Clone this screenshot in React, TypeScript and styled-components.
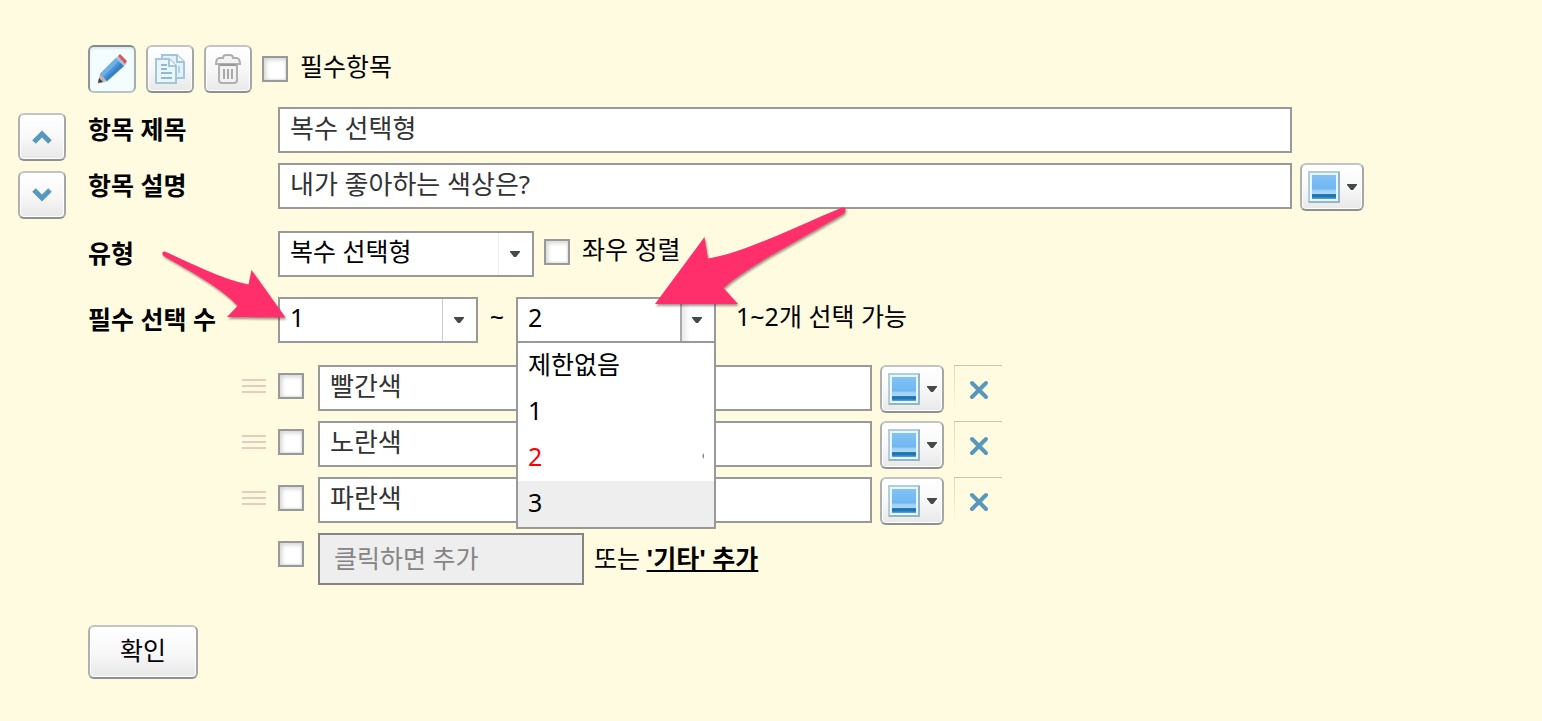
import React, { useState } from "react";
import styled, { createGlobalStyle, css } from "styled-components";

const GlobalStyle = createGlobalStyle`
  *, *::before, *::after { box-sizing: border-box; }
  body {
    margin: 0;
    background: #fffbe1;
    color: #000;
    font-family: "Noto Sans", "Noto Sans CJK KR", sans-serif;
    font-size: 25px;
    line-height: 36px;
  }
  button, input, select { font: inherit; color: inherit; margin: 0; }
`;

const Page = styled.main`
  position: relative;
  display: flex;
  gap: 22px;
  min-height: 100vh;
  padding: 45px 178px 42px 18px;
`;

const MoveColumn = styled.div`
  display: flex;
  flex: none;
  flex-direction: column;
  gap: 10px;
  padding-top: 68px;
`;

const Editor = styled.form`
  flex: 1;
  min-width: 0;
`;

const raised = css`
  display: flex;
  flex: none;
  align-items: center;
  justify-content: center;
  padding: 0;
  border: 2px solid;
  border-color: #c4c4c2 #a6a6a8 #909092 #b0b0b0;
  border-radius: 6px;
  background: linear-gradient(#fff, #f8f8f8 50%, #e8e8e8);
  box-shadow: inset 0 0 0 1px #fff;
`;

const IconButton = styled.button<{ $active?: boolean }>`
  ${raised}
  width: 48px;
  height: 48px;
  ${(p) =>
    p.$active &&
    css`
      border-color: #7f8b90 #a4afb3 #b9c2c4 #8b979c;
      background: #f3fdff;
      box-shadow: inset 0 2px 2px #dfeaec;
    `}
`;

const ImageButton = styled.button`
  ${raised}
  gap: 6px;
  width: 64px;
  height: 48px;
  padding-left: 2px;
`;

const RemoveButton = styled.button`
  display: flex;
  flex: none;
  align-items: center;
  justify-content: center;
  width: 48px;
  height: 48px;
  margin-left: 2px;
  padding: 0 0 0 1px;
  border: 0 solid #c6c3ae;
  border-top-width: 1px;
  background: linear-gradient(#dad7c2, #fffbe1) left / 1px 100% no-repeat;
`;

const SubmitButton = styled.button`
  ${raised}
  width: 110px;
  height: 54px;
  margin-top: 40px;
  padding-bottom: 4px;
`;

const Toolbar = styled.div`
  display: flex;
  align-items: center;
  gap: 10px;
  margin-bottom: 14px;
`;

const Row = styled.div<{ $after?: number; $inset?: boolean }>`
  display: flex;
  gap: 8px;
  margin-bottom: ${(p) => p.$after ?? 8}px;
  padding-right: ${(p) => (p.$inset ? 72 : 0)}px;
`;

const Name = styled.label`
  flex: none;
  width: 182px;
  height: 46px;
  font-weight: 700;
  line-height: 44px;
`;

const CheckLabel = styled.label<{ $indent?: boolean }>`
  display: flex;
  align-items: center;
  gap: 12px;
  height: 42px;
  padding-left: ${(p) => (p.$indent ? 2 : 0)}px;
`;

const CheckText = styled.span`
  padding-bottom: 6px;
`;

const Check = styled.input.attrs({ type: "checkbox" })`
  appearance: none;
  flex: none;
  width: 26px;
  height: 26px;
  border: 2px solid #999;
  background: #fff;
  box-shadow: inset 2px 2px 4px #d4d4d4, inset -1px -1px 2px #e4e4e4;
  &:checked { background: #5a9abf; }
`;

const TextInput = styled.input.attrs({ type: "text" })`
  flex: 1;
  min-width: 0;
  height: 46px;
  padding: 0 10px 6px;
  border: 2px solid #999;
  border-radius: 0;
  background: #fff;
  color: #333;
  font-size: 26px;
  outline: 0;
`;

const OptionInput = styled(TextInput)`
  flex: 0 1 554px;
`;

const AddInput = styled(TextInput)`
  flex: 0 1 266px;
  height: 52px;
  padding: 0 14px 2px;
  border-color: #858585;
  background: #eee;
  font-size: 25px;
  &::placeholder { color: #858585; opacity: 1; }
`;

const SelectBox = styled.div<{ $width: number }>`
  position: relative;
  display: grid;
  flex: none;
  width: ${(p) => p.$width}px;
  height: 46px;
`;

const Select = styled.select`
  grid-area: 1 / 1;
  appearance: none;
  width: 100%;
  padding: 0 40px 6px 10px;
  border: 2px solid #999;
  border-radius: 0;
  background: #fff;
  outline: 0;
`;

const SelectArrow = styled.span<{ $tone: string; $open?: boolean }>`
  z-index: 1;
  display: flex;
  grid-area: 1 / 1;
  align-items: center;
  justify-content: center;
  justify-self: end;
  width: 34px;
  margin: 2px 2px 2px 0;
  padding-right: 2px;
  border-left: ${(p) => (p.$open ? 2 : 1)}px solid ${(p) => p.$tone};
  background: ${(p) => (p.$open ? "linear-gradient(90deg, #e8e8e8, #fff 8px)" : "#fff")};
  pointer-events: none;
`;

const Menu = styled.ul`
  position: absolute;
  z-index: 2;
  top: 44px;
  left: 0;
  width: 100%;
  margin: 0;
  padding: 0;
  border: 2px solid #999;
  background: #fff;
  list-style: none;
`;

const MenuItem = styled.li<{ $selected?: boolean; $hover?: boolean }>`
  display: flex;
  align-items: center;
  justify-content: space-between;
  height: 46px;
  padding: 0 10px 4px;
  background: ${(p) => (p.$hover ? "#eee" : "#fff")};
  color: ${(p) => (p.$selected ? "#f00" : "#000")};
`;

const Tilde = styled.span`
  flex: none;
  width: 22px;
  line-height: 38px;
  text-align: center;
`;

const Summary = styled.span`
  padding-left: 12px;
  line-height: 38px;
  white-space: nowrap;
`;

const Options = styled.div`
  margin-left: 154px;
`;

const OptionRow = styled.div`
  display: flex;
  align-items: flex-start;
  gap: 8px;
  margin-bottom: 8px;
`;

const Leading = styled.div`
  display: flex;
  flex: none;
  align-items: center;
  justify-content: flex-end;
  gap: 12px;
  width: 62px;
  height: 42px;
  margin-right: 6px;
`;

const Alternative = styled.span`
  padding-left: 2px;
  line-height: 50px;
  white-space: nowrap;
`;

const EtcLink = styled.a`
  color: #000;
  font-weight: 700;
  text-decoration: underline;
  text-decoration-thickness: 2px;
  text-underline-offset: 2px;
`;

const Pointers = styled.svg`
  position: absolute;
  z-index: 3;
  top: 200px;
  left: 155px;
  pointer-events: none;
  filter: drop-shadow(1px 2px 1px rgba(70, 50, 40, 0.5));
`;

const Pencil = () => (
  <svg width="36" height="36" viewBox="0 0 36 36" aria-hidden="true">
    <path d="M4 33 6 23 25 5 33 12 14 31Z" fill="#c6d3d8" opacity=".5" />
    <path d="M4 32 6 23 13 30Z" fill="#c3b5a9" />
    <path d="m4 32 1-5 4 4Z" fill="#38434a" />
    <path d="M6 23 22 7l8 8-17 15Z" fill="#4a93d6" />
    <path d="M6 23 22 7l3 3L9 26Z" fill="#6fb0e6" />
    <path d="m11 28 16-16 3 3-17 15Z" fill="#3a7fc2" />
    <path d="m22 7 2-2 8 8-2 2Z" fill="#aac5da" />
    <path d="m24 5 2-2 7 7-2 3Z" fill="#df555c" />
  </svg>
);

const Copy = () => (
  <svg width="34" height="34" viewBox="0 0 34 34" fill="#e2f1fa" stroke="#a3c6dc" strokeWidth="2" aria-hidden="true">
    <path d="M9 3h15l7 7v16H9Z" />
    <path d="M24 3v7h7" fill="#f6fcff" />
    <path d="M3 7h13l7 7v17H3Z" fill="#e9f7fe" />
    <path d="M16 7v7h7" fill="#f6fcff" />
    <path d="M8 13h6M8 17h6M8 21h11M8 26h11" stroke="#8fb9d4" />
    <path d="M26 14v7" stroke="#b5d3e5" />
  </svg>
);

const Trash = () => (
  <svg width="28" height="34" viewBox="0 0 28 34" fill="#f2f2f2" stroke="#b0b0b0" strokeWidth="2" aria-hidden="true">
    <path d="M5 12v16q0 3 3 3h12q3 0 3-3V12Z" />
    <path d="M9 6q0-3 3-3h4q3 0 3 3h4q3 1 3 6H2q0-5 3-6Z" />
    <path d="M6 13h16" stroke="#989898" />
    <path d="M10 17v10M14 17v10M18 17v10" stroke="#a8a8a8" />
  </svg>
);

const Chevron = ({ down }: { down?: boolean }) => (
  <svg width="20" height="14" viewBox="0 0 20 14" fill="none" stroke="#5798bc" strokeWidth="5" aria-hidden="true">
    <path d={down ? "m2 2 8 8 8-8" : "m2 12 8-8 8 8"} />
  </svg>
);

const Caret = () => (
  <svg width="12" height="7" viewBox="0 0 12 7" aria-hidden="true">
    <path d="M1 0h10v1L7 6H5L1 1Z" fill="#444a4a" />
  </svg>
);

const Picture = () => (
  <svg width="32" height="32" viewBox="0 0 32 32" aria-hidden="true">
    <defs>
      <linearGradient id="sky" x1="0" y1="0" x2="0" y2="1">
        <stop offset="0" stopColor="#82c3f5" />
        <stop offset=".58" stopColor="#70b6f0" />
        <stop offset=".64" stopColor="#9fd0f5" />
        <stop offset=".78" stopColor="#a9d7f5" />
        <stop offset=".82" stopColor="#1766a5" />
        <stop offset=".93" stopColor="#2584c6" />
        <stop offset="1" stopColor="#5eabd8" />
      </linearGradient>
    </defs>
    <path d="M1 1h30v30H1Z" fill="#e6f6fc" stroke="#b0cede" strokeWidth="2" />
    <path d="M1 31h30V1" fill="none" stroke="#94b5c8" strokeWidth="2" />
    <path d="M4 4h24v24H4Z" fill="url(#sky)" />
  </svg>
);

const Cross = () => (
  <svg width="20" height="20" viewBox="0 0 20 20" stroke="#5798bc" strokeWidth="4" strokeLinecap="round" aria-hidden="true">
    <path d="m3 3 14 14M17 3 3 17" />
  </svg>
);

const Grip = () => (
  <svg width="24" height="18" viewBox="0 0 24 18" strokeWidth="2" aria-hidden="true">
    <path d="M0 5h24M0 11h24M0 17h24" stroke="#fff6ea" />
    <path d="M0 3h24M0 9h24M0 15h24" stroke="#e2d0b4" />
  </svg>
);

const ImagePicker = () => (
  <ImageButton type="button" aria-label="이미지 추가">
    <Picture />
    <Caret />
  </ImageButton>
);

const limits = ["제한없음", "1", "2", "3"];

export default function App() {
  const [options, setOptions] = useState(["빨간색", "노란색", "파란색"]);
  const [max, setMax] = useState("2");

  return (
    <>
      <GlobalStyle />
      <Page>
        <MoveColumn>
          <IconButton type="button" aria-label="위로">
            <Chevron />
          </IconButton>
          <IconButton type="button" aria-label="아래로">
            <Chevron down />
          </IconButton>
        </MoveColumn>

        <Editor onSubmit={(e) => e.preventDefault()}>
          <Toolbar>
            <IconButton type="button" $active aria-label="편집">
              <Pencil />
            </IconButton>
            <IconButton type="button" aria-label="복사">
              <Copy />
            </IconButton>
            <IconButton type="button" aria-label="삭제">
              <Trash />
            </IconButton>
            <CheckLabel>
              <Check />
              <CheckText>필수항목</CheckText>
            </CheckLabel>
          </Toolbar>

          <Row $inset $after={10}>
            <Name htmlFor="title">항목 제목</Name>
            <TextInput id="title" defaultValue="복수 선택형" />
          </Row>
          <Row $after={20}>
            <Name htmlFor="description">항목 설명</Name>
            <TextInput id="description" defaultValue="내가 좋아하는 색상은?" />
            <ImagePicker />
          </Row>
          <Row $after={20}>
            <Name htmlFor="kind">유형</Name>
            <SelectBox $width={256}>
              <Select id="kind">
                <option>복수 선택형</option>
              </Select>
              <SelectArrow $tone="#eee">
                <Caret />
              </SelectArrow>
            </SelectBox>
            <CheckLabel $indent>
              <Check />
              <CheckText>좌우 정렬</CheckText>
            </CheckLabel>
          </Row>
          <Row $after={22}>
            <Name htmlFor="min">필수 선택 수</Name>
            <SelectBox $width={200}>
              <Select id="min">
                <option>1</option>
              </Select>
              <SelectArrow $tone="#ccc">
                <Caret />
              </SelectArrow>
            </SelectBox>
            <Tilde>~</Tilde>
            <SelectBox $width={200}>
              <Select aria-label="최대 선택 수" value={max} onChange={(e) => setMax(e.target.value)}>
                {limits.map((l) => (
                  <option key={l}>{l}</option>
                ))}
              </Select>
              <SelectArrow $tone="#aaa" $open>
                <Caret />
              </SelectArrow>
              <Menu role="listbox" aria-label="최대 선택 수">
                {limits.map((l) => (
                  <MenuItem
                    key={l}
                    role="option"
                    aria-selected={l === max}
                    $selected={l === max}
                    $hover={l === "3"}
                    onClick={() => setMax(l)}
                  >
                    {l}
                    {l === max && (
                      <svg width="2" height="6" viewBox="0 0 2 6" aria-hidden="true">
                        <path d="M2 0v6L0 3Z" fill="#888" />
                      </svg>
                    )}
                  </MenuItem>
                ))}
              </Menu>
            </SelectBox>
            <Summary>1~2개 선택 가능</Summary>
          </Row>

          <Options>
            {options.map((text, i) => (
              <OptionRow key={i}>
                <Leading>
                  <Grip />
                  <Check aria-label={text} />
                </Leading>
                <OptionInput
                  aria-label={`보기 ${i + 1}`}
                  value={text}
                  onChange={(e) => setOptions(options.map((o, j) => (j === i ? e.target.value : o)))}
                />
                <ImagePicker />
                <RemoveButton type="button" aria-label="삭제">
                  <Cross />
                </RemoveButton>
              </OptionRow>
            ))}
            <OptionRow>
              <Leading>
                <Check aria-label="새 보기" />
              </Leading>
              <AddInput aria-label="보기 추가" placeholder="클릭하면 추가" />
              <Alternative>
                또는 <EtcLink href="#etc">'기타' 추가</EtcLink>
              </Alternative>
            </OptionRow>
          </Options>

          <SubmitButton type="submit">확인</SubmitButton>
        </Editor>

        <Pointers width="700" height="120" viewBox="155 200 700 120" fill="#ff2f6c" aria-hidden="true">
          <path d="M165 251.500C190 263 222 279 248.500 284.500L251.500 270 285.500 317.500 227 317 237.500 306C224 290 190 271 163 255.500Q161 251 165 251.500Z" />
          <path d="M842 207.500C800 225 743 253 708 258.500L704.500 237 655 304H738L723.500 288C748 266 800 240 844 213.500Q848 207 842 207.500Z" />
        </Pointers>
      </Page>
    </>
  );
}
